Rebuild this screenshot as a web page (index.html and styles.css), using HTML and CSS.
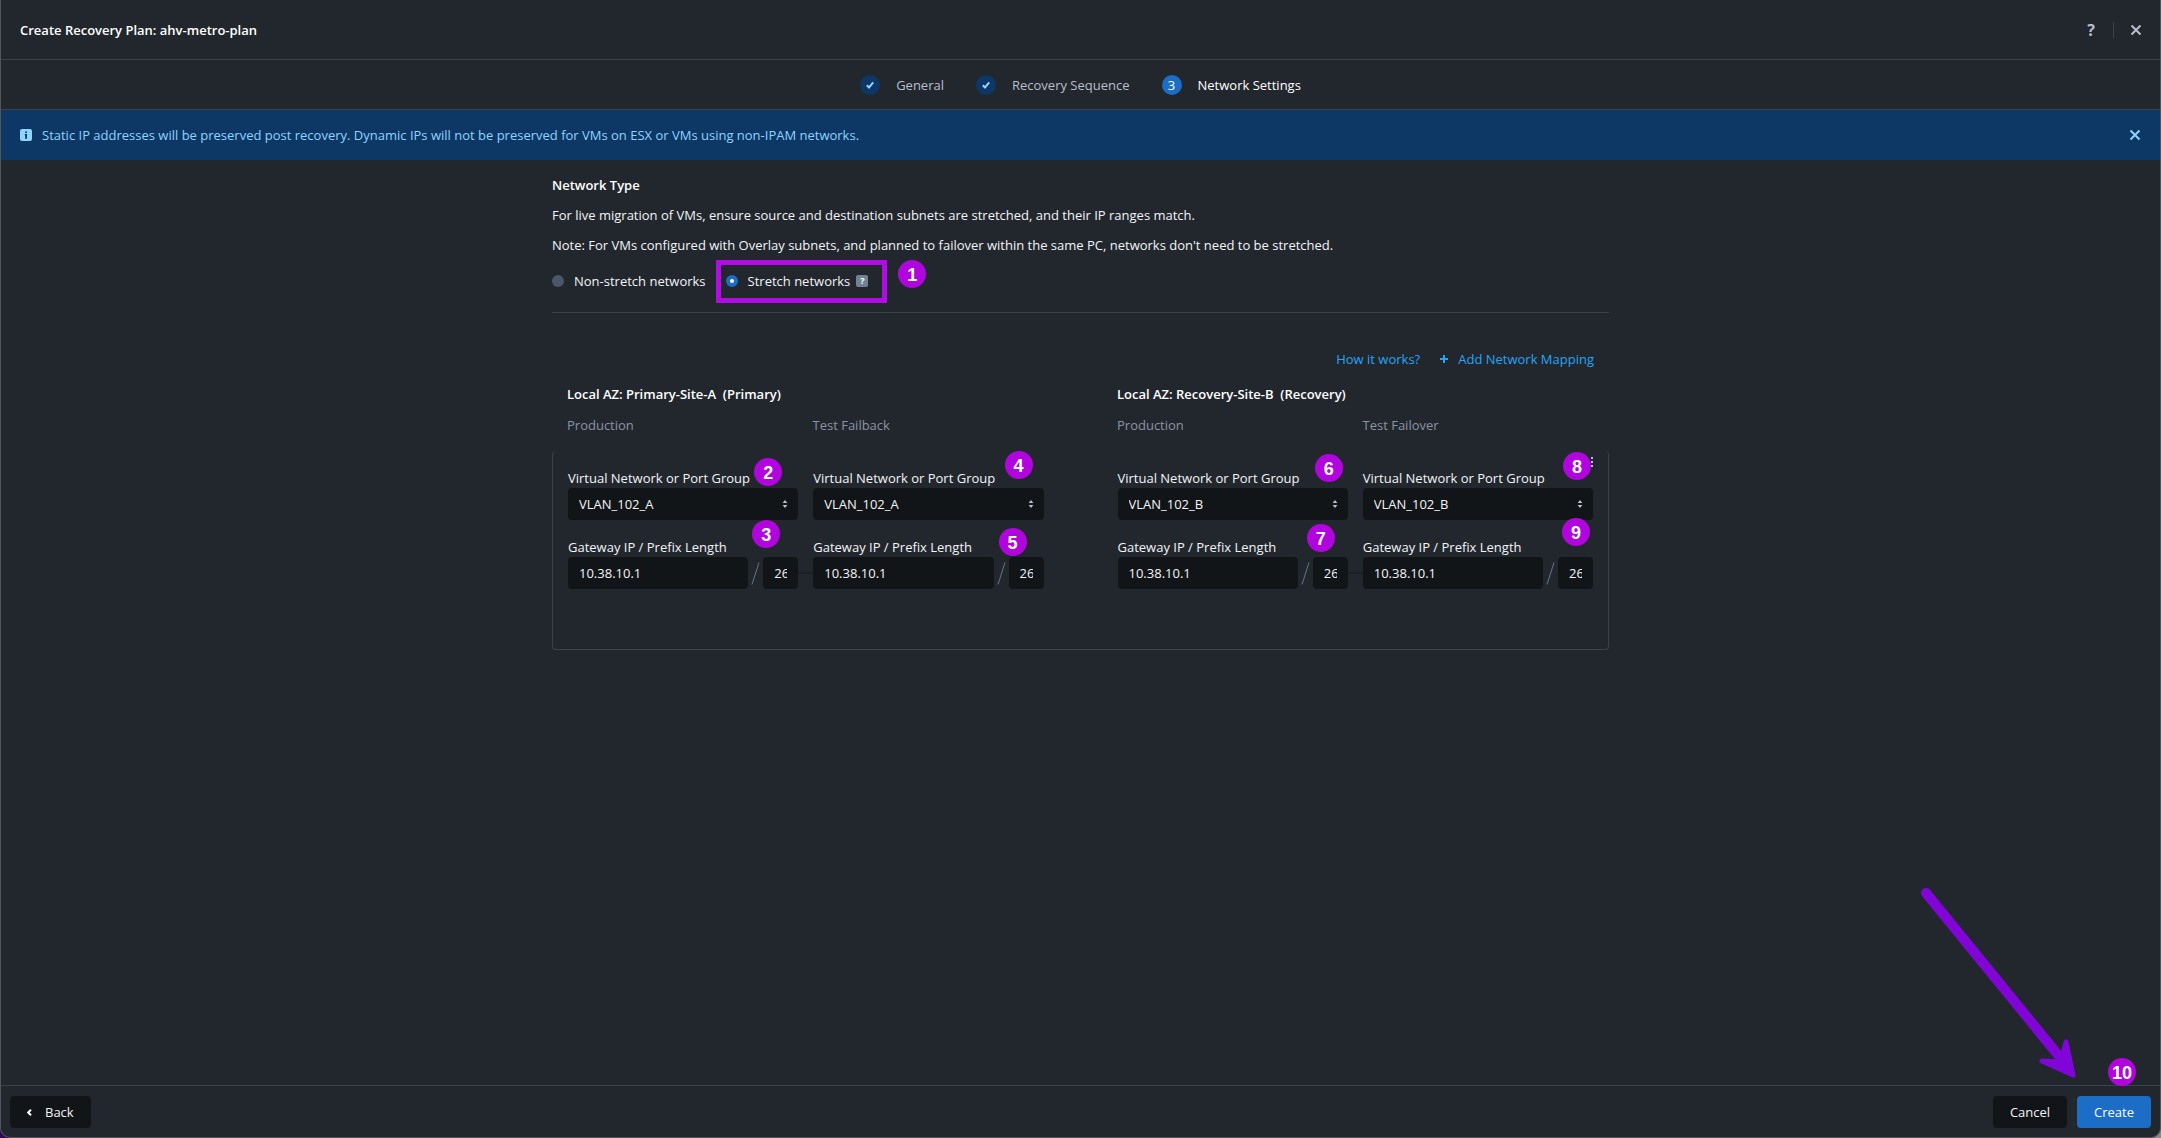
FILE: index.html
```html
<!DOCTYPE html>
<html lang="en">
<head>
  <meta charset="UTF-8" />
  <title>Create Recovery Plan</title>
  <link rel="stylesheet" href="styles.css">
</head>
<body>
  <div class="window">
    <header class="titlebar">
      <h1>Create Recovery Plan: ahv-metro-plan</h1>
      <div class="titlebar-actions">
        <button class="icon-btn help-btn" aria-label="Help">?</button>
        <span class="divider"></span>
        <button class="icon-btn" aria-label="Close">
          <svg width="12" height="12" viewBox="0 0 12 12"><path d="M1.5 1.5l9 9M10.5 1.5l-9 9" /></svg>
        </button>
      </div>
    </header>

    <ol class="steps">
      <li class="step">
        <span class="step-mark"><svg width="8" height="8" viewBox="0 0 8 8"><path d="M0.8 4.2L3 6.4L7.2 1.4" /></svg></span>
        General
      </li>
      <li class="step">
        <span class="step-mark"><svg width="8" height="8" viewBox="0 0 8 8"><path d="M0.8 4.2L3 6.4L7.2 1.4" /></svg></span>
        Recovery Sequence
      </li>
      <li class="step active">
        <span class="step-mark">3</span>
        Network Settings
      </li>
    </ol>

    <div class="banner">
      <svg class="info-icon" width="12" height="12" viewBox="0 0 12 12">
        <rect width="12" height="12" rx="2" fill="#90d3ff" />
        <path d="M5.2 2.4h1.8v1.5H5.2zM4.8 5h2.2v4.8H5.2V6.2h-.4z" fill="#0d3865" />
      </svg>
      <p>Static IP addresses will be preserved post recovery. Dynamic IPs will not be preserved for VMs on ESX or VMs using non-IPAM networks.</p>
      <button class="icon-btn" aria-label="Dismiss">
        <svg width="12" height="12" viewBox="0 0 12 12"><path d="M1.5 1.5l9 9M10.5 1.5l-9 9" /></svg>
      </button>
    </div>

    <main class="content">
      <section class="network-type">
        <h2>Network Type</h2>
        <p>For live migration of VMs, ensure source and destination subnets are stretched, and their IP ranges match.</p>
        <p>Note: For VMs configured with Overlay subnets, and planned to failover within the same PC, networks don't need to be stretched.</p>
        <div class="radios">
          <label class="radio"><input type="radio" name="type">Non-stretch networks</label>
          <div class="radio-picked">
            <label class="radio"><input type="radio" name="type" checked>Stretch networks</label>
            <span class="hint">?</span>
            <span class="highlight"></span>
            <span class="badge badge-1">1</span>
          </div>
        </div>
      </section>

      <div class="links">
        <a href="#">How it works?</a>
        <a href="#" class="add-link">
          <svg width="8" height="8" viewBox="0 0 8 8"><path d="M4 0v8M0 4h8" /></svg>
          Add Network Mapping
        </a>
      </div>

      <div class="sites">
        <div class="site">
          <h3>Local AZ: Primary-Site-A&nbsp; (Primary)</h3>
          <div class="columns"><span>Production</span><span>Test Failback</span></div>
        </div>
        <div class="site">
          <h3>Local AZ: Recovery-Site-B&nbsp; (Recovery)</h3>
          <div class="columns"><span>Production</span><span>Test Failover</span></div>
        </div>
      </div>

      <section class="mapping">
        <button class="more-btn" aria-label="More">
          <svg width="2" height="12" viewBox="0 0 2 12"><path d="M0 1h2v2H0zM0 5h2v2H0zM0 9h2v2H0z" /></svg>
        </button>
        <div class="pair">
          <div class="network">
            <label for="net1">Virtual Network or Port Group</label>
            <div class="select">
              <select id="net1"><option>VLAN_102_A</option></select>
              <svg width="6" height="8" viewBox="0 0 6 8"><path d="M3 0l2.4 3H.6zM3 8L.6 5h4.8z" /></svg>
            </div>
            <label for="ip1">Gateway IP / Prefix Length</label>
            <div class="gateway">
              <input id="ip1" class="ip" type="text" value="10.38.10.1">
              <svg class="slash" width="9" height="23" viewBox="0 0 9 23"><path d="M8 .5L1 22.5" /></svg>
              <input class="prefix" type="text" value="26" aria-label="Prefix length">
            </div>
            <span class="badge badge-2">2</span>
            <span class="badge badge-3">3</span>
          </div>
          <div class="network">
            <label for="net2">Virtual Network or Port Group</label>
            <div class="select">
              <select id="net2"><option>VLAN_102_A</option></select>
              <svg width="6" height="8" viewBox="0 0 6 8"><path d="M3 0l2.4 3H.6zM3 8L.6 5h4.8z" /></svg>
            </div>
            <label for="ip2">Gateway IP / Prefix Length</label>
            <div class="gateway">
              <input id="ip2" class="ip" type="text" value="10.38.10.1">
              <svg class="slash" width="9" height="23" viewBox="0 0 9 23"><path d="M8 .5L1 22.5" /></svg>
              <input class="prefix" type="text" value="26" aria-label="Prefix length">
            </div>
            <span class="badge badge-4">4</span>
            <span class="badge badge-5">5</span>
          </div>
        </div>
        <div class="pair">
          <div class="network">
            <label for="net3">Virtual Network or Port Group</label>
            <div class="select">
              <select id="net3"><option>VLAN_102_B</option></select>
              <svg width="6" height="8" viewBox="0 0 6 8"><path d="M3 0l2.4 3H.6zM3 8L.6 5h4.8z" /></svg>
            </div>
            <label for="ip3">Gateway IP / Prefix Length</label>
            <div class="gateway">
              <input id="ip3" class="ip" type="text" value="10.38.10.1">
              <svg class="slash" width="9" height="23" viewBox="0 0 9 23"><path d="M8 .5L1 22.5" /></svg>
              <input class="prefix" type="text" value="26" aria-label="Prefix length">
            </div>
            <span class="badge badge-6">6</span>
            <span class="badge badge-7">7</span>
          </div>
          <div class="network">
            <label for="net4">Virtual Network or Port Group</label>
            <div class="select">
              <select id="net4"><option>VLAN_102_B</option></select>
              <svg width="6" height="8" viewBox="0 0 6 8"><path d="M3 0l2.4 3H.6zM3 8L.6 5h4.8z" /></svg>
            </div>
            <label for="ip4">Gateway IP / Prefix Length</label>
            <div class="gateway">
              <input id="ip4" class="ip" type="text" value="10.38.10.1">
              <svg class="slash" width="9" height="23" viewBox="0 0 9 23"><path d="M8 .5L1 22.5" /></svg>
              <input class="prefix" type="text" value="26" aria-label="Prefix length">
            </div>
            <span class="badge badge-8">8</span>
            <span class="badge badge-9">9</span>
          </div>
        </div>
      </section>
    </main>

    <footer class="footer">
      <button class="btn back-btn">
        <svg width="5" height="7" viewBox="0 0 5 7"><path d="M4 .7L1.2 3.5L4 6.3" /></svg>
        Back
      </button>
      <div class="footer-actions">
        <button class="btn">Cancel</button>
        <button class="btn primary">Create</button>
      </div>
      <span class="badge badge-10">10</span>
      <!-- arrow to the Create button -->
      <svg class="arrow" width="160" height="194" viewBox="0 0 160 194">
        <path class="shaft" d="M7 7L144 175" />
        <path class="head" d="M147 156L154 189L123 175L142 176Z" />
      </svg>
    </footer>
  </div>
</body>
</html>
```
FILE: styles.css
```css
* {
  box-sizing: border-box;
}

body {
  margin: 0;
  background: linear-gradient(90deg, #2a0a52, #8a8a8c);
  color: #f2f4f6;
  font-family: "Open Sans", sans-serif;
  font-size: 13px;
  line-height: 20px;
}

h1, h2, h3, p, ol {
  margin: 0;
  padding: 0;
}

h1, h2, h3 {
  color: #fff;
  font-size: 13px;
  font-weight: 600;
}

button, input, select {
  font: inherit;
  color: inherit;
}

.window {
  display: flex;
  flex-direction: column;
  min-height: 100vh;
  background: #22272e;
  border: 1px solid #50545c;
  border-top: none;
  border-radius: 0 0 10px 10px;
}

.titlebar {
  display: flex;
  align-items: center;
  justify-content: space-between;
  height: 60px;
  padding: 0 18px 0 19px;
  border-bottom: 1px solid #3b424c;
}

.titlebar-actions {
  display: flex;
  align-items: center;
  gap: 16px;
  color: #b8bfca;
}

.divider {
  width: 1px;
  height: 16px;
  background: #3b424c;
}

.icon-btn {
  display: flex;
  align-items: center;
  justify-content: center;
  width: 12px;
  height: 20px;
  padding: 0;
  border: none;
  background: none;
  cursor: pointer;
}

.icon-btn path {
  fill: none;
  stroke: currentColor;
  stroke-width: 2;
}

.help-btn {
  font-size: 16px;
  font-weight: 700;
}

/* wizard steps */
.steps {
  display: flex;
  align-items: center;
  justify-content: center;
  gap: 32px;
  height: 50px;
  list-style: none;
  border-bottom: 1px solid #3b424c;
}

.step {
  display: flex;
  align-items: center;
  gap: 16px;
  color: #b8bfca;
}

.step-mark {
  display: flex;
  align-items: center;
  justify-content: center;
  width: 20px;
  height: 20px;
  border-radius: 50%;
  background: #0d3865;
}

.step-mark path {
  fill: none;
  stroke: #90d3ff;
  stroke-width: 2;
}

.step.active {
  color: #fff;
}

.step.active .step-mark {
  background: #1b6dc6;
}

.banner {
  display: flex;
  align-items: center;
  gap: 10px;
  height: 50px;
  padding: 0 19px;
  background: #0d3865;
  color: #90d3ff;
}

.banner p {
  flex: 1;
}

.content {
  flex: 1;
  width: 100%;
  max-width: 1057px;
  margin: 0 auto;
  padding-top: 15px;
}

.network-type {
  padding-bottom: 21px;
  border-bottom: 1px solid #3b424c;
}

.network-type p {
  margin-top: 10px;
}

.radios {
  display: flex;
  gap: 20px;
  margin-top: 16px;
}

.radio-picked {
  position: relative;
  display: flex;
  align-items: center;
  gap: 6px;
}

.radio {
  display: flex;
  align-items: center;
  gap: 10px;
}

.radio input {
  appearance: none;
  width: 12px;
  height: 12px;
  margin: 0;
  border-radius: 50%;
  background: #4c5666;
}

.radio input:checked {
  background: #fff;
  border: 4px solid #1b6dc6;
}

.hint {
  width: 12px;
  height: 12px;
  border-radius: 2px;
  background: #728295;
  color: #fff;
  font-size: 9px;
  font-weight: 700;
  line-height: 12px;
  text-align: center;
}

.highlight {
  position: absolute;
  top: -11px;
  left: -10px;
  right: -19px;
  height: 43px;
  border: 5px solid #b10be6;
}

.links {
  display: flex;
  justify-content: flex-end;
  gap: 20px;
  margin-top: 36px;
  padding-right: 15px;
}

.links a {
  color: #22a5f7;
  text-decoration: none;
}

.add-link {
  display: flex;
  align-items: center;
  gap: 10px;
}

.add-link path {
  stroke: #22a5f7;
  stroke-width: 2;
}

.sites {
  display: grid;
  grid-template-columns: 1fr 1fr;
  gap: 74px;
  margin: 15px 0 16px;
  padding: 0 16px 0 15px;
}

.columns {
  display: grid;
  grid-template-columns: 1fr 1fr;
  gap: 15px;
  margin-top: 11px;
  color: #8b93a3;
}

.mapping {
  position: relative;
  display: grid;
  grid-template-columns: 1fr 1fr;
  gap: 74px;
  padding: 17px 15px 60px;
  border: 1px solid #3b424c;
  border-top: none;
  border-radius: 4px;
}

.more-btn {
  position: absolute;
  top: 5px;
  right: 15px;
  display: flex;
  padding: 0;
  border: none;
  background: none;
}

.more-btn path {
  fill: #b8bfca;
}

.pair {
  display: grid;
  grid-template-columns: 1fr 1fr;
  gap: 15px;
}

.network {
  position: relative;
}

.network label {
  display: block;
}

.select {
  position: relative;
  margin-bottom: 17px;
}

.select svg {
  position: absolute;
  top: 12px;
  right: 10px;
  fill: #b8bfca;
  pointer-events: none;
}

.select select,
.gateway input {
  display: block;
  height: 32px;
  padding: 0 11px;
  border: none;
  border-radius: 4px;
  background: #121518;
  outline: none;
}

.select select {
  appearance: none;
  width: 100%;
}

.gateway {
  display: flex;
  align-items: center;
  gap: 3px;
}

.gateway .ip {
  flex: 1;
  width: 0;
}

.gateway .prefix {
  width: 35px;
}

.slash path {
  fill: none;
  stroke: #66748a;
}

/* faint rule joining the two gateway rows */
.network:first-child .gateway::after {
  content: "";
  position: absolute;
  left: 100%;
  bottom: 15px;
  width: 15px;
  height: 2px;
  background: #1b2026;
}

.footer {
  position: relative;
  display: flex;
  align-items: center;
  justify-content: space-between;
  padding: 10px 9px 9px;
  border-top: 1px solid #3b424c;
}

.footer-actions {
  display: flex;
  gap: 10px;
}

.btn {
  min-width: 74px;
  height: 32px;
  padding: 0 15px;
  border: none;
  border-radius: 4px;
  background: #121518;
  cursor: pointer;
}

.btn.primary {
  background: #1b6dc6;
  color: #fff;
}

.back-btn {
  display: flex;
  align-items: center;
  gap: 13px;
  padding: 0 17px;
}

.back-btn path {
  fill: none;
  stroke: #fff;
  stroke-width: 2;
}

/* numbered markers */
.badge {
  position: absolute;
  z-index: 2;
  width: 28px;
  height: 28px;
  border-radius: 50%;
  background: #b005dd;
  color: #fff;
  font-family: "Liberation Sans", Arial, sans-serif;
  font-size: 18px;
  font-weight: 700;
  line-height: 31px;
  text-align: center;
}

.badge-1 { top: -11px; right: -58px; }
.badge-2 { top: -10px; right: 16px; }
.badge-3 { top: 52px; right: 18px; }
.badge-4 { top: -17px; right: 11px; }
.badge-5 { top: 60px; right: 17px; }
.badge-6 { top: -14px; right: 5px; }
.badge-7 { top: 56px; right: 13px; }
.badge-8 { top: -16px; right: 2px; }
.badge-9 { top: 50px; right: 3px; }
.badge-10 { top: -28px; right: 24px; }

.arrow {
  position: absolute;
  right: 81px;
  bottom: 57px;
}

.arrow path {
  stroke: #8205d8;
  stroke-linecap: round;
  stroke-linejoin: round;
}

.arrow .shaft {
  stroke-width: 10;
}

.arrow .head {
  fill: #8205d8;
  stroke-width: 5;
}
```
